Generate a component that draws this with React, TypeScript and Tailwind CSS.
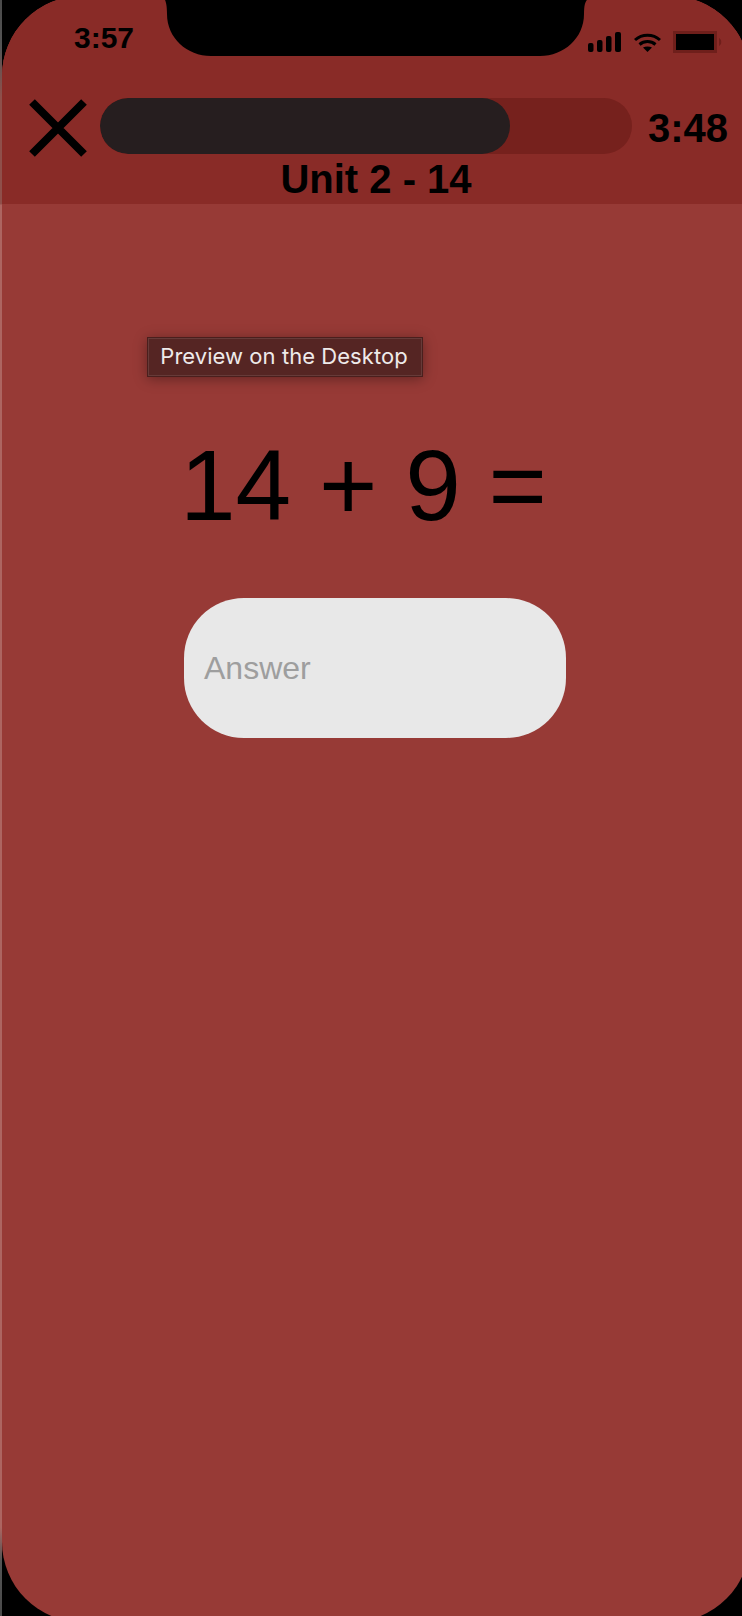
export default function App() {
  return (
    <div className="relative flex h-[1616px] w-[742px] overflow-hidden bg-black font-['Liberation_Sans',Arial,sans-serif] text-black">
      <div className="w-[2px] shrink-0 bg-[linear-gradient(180deg,#4a4a4a_0%,#555555_3%,#8f4f4a_6%,#8f4f4a_12.6%,#ad6561_12.7%,#ad6561_94.5%,#555555_96.5%,#4a4a4a_100%)]" />
      <div className="-mt-[4px] flex h-[1626px] w-[748px] shrink-0 flex-col overflow-hidden rounded-[80px] bg-[#973a36]">
        <header className="relative flex h-[208px] shrink-0 flex-col bg-[#892b27]">
          <div className="flex h-[102px] shrink-0 items-start justify-between">
            <span className="ml-[72px] mt-[24px] text-[30px] font-bold leading-[36px]">3:57</span>
            <div className="mr-[28px] mt-[35px] flex items-center gap-[12px]">
              <svg width="33" height="20" viewBox="0 0 33 20" fill="black"><rect x="0" y="11" width="5.5" height="9" rx="2"/><rect x="9" y="8" width="5.5" height="12" rx="2"/><rect x="18" y="4" width="5.5" height="16" rx="2"/><rect x="27" y="0" width="6" height="20" rx="2"/></svg>
              <svg className="ml-[1px]" width="27" height="19" viewBox="0 0 27 19" fill="none" stroke="black" strokeWidth="3"><path d="M1 7 C8 0.6 19 0.6 26 7"/><path d="M5.5 11.5 C10 7.6 17 7.6 21.5 11.5"/><path d="M13.5 19 L9 14.5 C11.5 13 15.5 13 18 14.5 Z" fill="black" stroke="none"/></svg>
              <svg width="49" height="22" viewBox="0 0 49 22"><rect x="1.5" y="1.5" width="41" height="19" fill="black" stroke="#6f1f1b" strokeWidth="3"/><path d="M46 7 C49 8.5 49 13.5 46 15 Z" fill="#6f1f1b"/></svg>
            </div>
          </div>
          <div className="flex h-[56px] shrink-0 items-center">
            <svg className="ml-[27px] mt-[3px] shrink-0" width="58" height="58" viewBox="0 0 58 58" stroke="black" strokeWidth="8"><path d="M3 3 L55 55 M55 3 L3 55"/></svg>
            <div className="ml-[13px] h-[56px] w-[532px] shrink-0 overflow-hidden rounded-full bg-[#76211d]">
              <div className="h-full w-[410px] rounded-full bg-[#261e1f]" />
            </div>
            <span className="ml-[16px] mt-[4px] text-[40px] font-bold leading-none">3:48</span>
          </div>
          <div className="mt-[2px] w-[748px] text-center text-[40px] font-bold leading-[46px]">Unit 2 - 14</div>
        </header>
        <main className="flex flex-1 flex-col items-start">
          <div className="ml-[145px] mt-[133px] flex h-[40px] w-[276px] items-center justify-center border border-[#4a1f1d] bg-[#552523] pb-[2px] pr-[2px] font-['Inter',sans-serif] text-[22px] tracking-[0.05px] text-[#eeeaea] shadow-[0_2px_12px_rgba(0,0,0,0.35),inset_0_0_0_1px_rgba(255,255,255,0.1)]">Preview on the Desktop</div>
          <div className="ml-[178px] mt-[52px] text-[100px] leading-[112px] whitespace-nowrap">14 + 9 =</div>
          <div className="ml-[182px] mt-[57px] flex h-[140px] w-[382px] items-center rounded-[60px] bg-[#e8e8e8] pl-[20px] text-[32px] text-[#9e9e9e]">Answer</div>
        </main>
      </div>
      <svg className="absolute left-0 top-0" width="742" height="57" viewBox="0 0 742 57" fill="black"><path d="M165 0 C166 2 167 6 167 14 C167 38 187 56 211 56 L540 56 C564 56 584 38 584 14 C584 6 585 2 587 0 Z"/></svg>
    </div>
  );
}
